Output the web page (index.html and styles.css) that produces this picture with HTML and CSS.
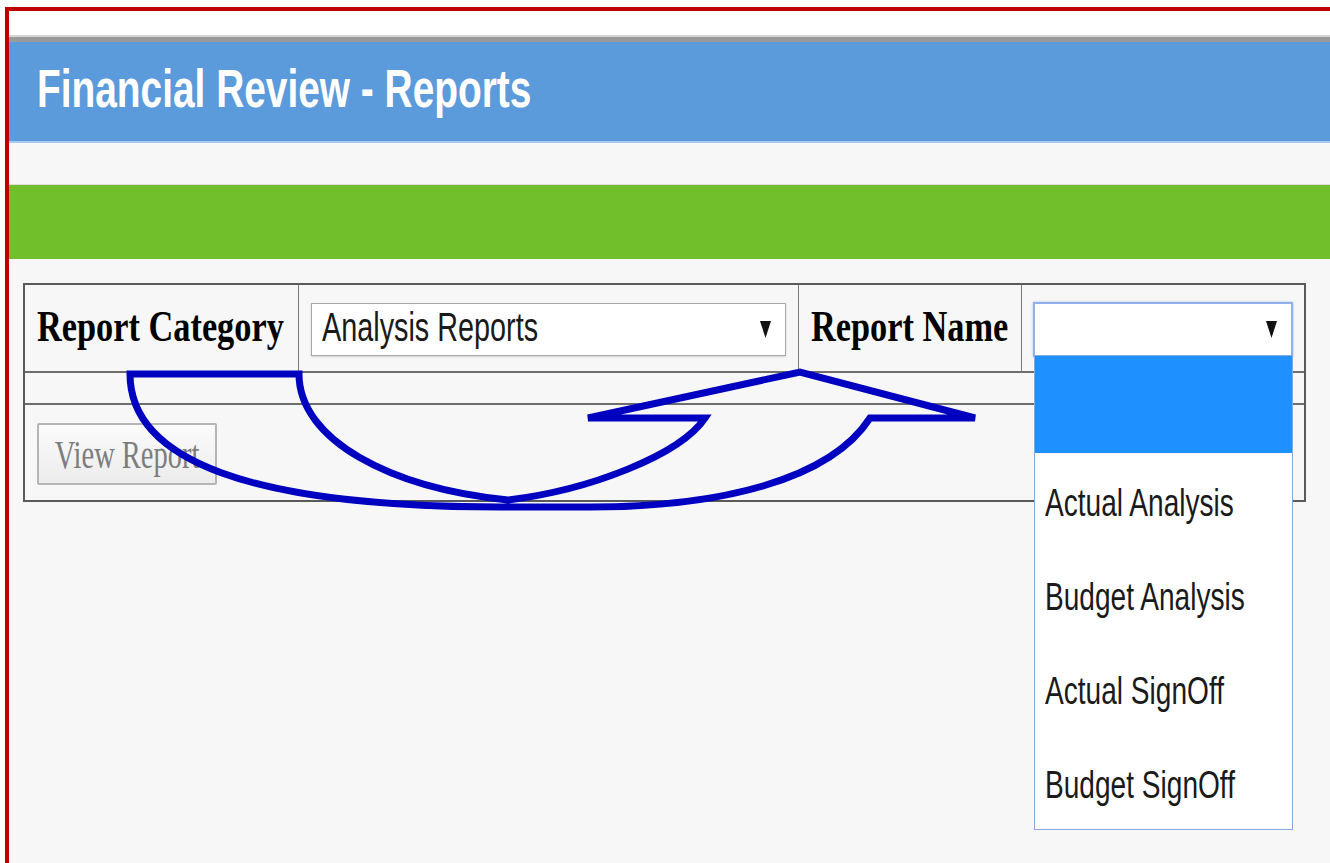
FILE: index.html
```html
<!DOCTYPE html>
<html lang="en">
<head>
<meta charset="utf-8">
<title>Financial Review - Reports</title>
<link rel="stylesheet" href="styles.css">
</head>
<body>
<div class="frame">
  <div class="topgap"></div>
  <div class="shade"></div>
  <header class="header">
    <h1 class="title"><span class="sq sq-title">Financial Review - Reports</span></h1>
  </header>
  <main class="content">
    <div class="band"></div>
    <div class="report-table">
      <div class="row row-fields">
        <div class="cell cell-label1"><span class="sq sq-label">Report Category</span></div>
        <div class="cell cell-select1">
          <div class="select select-wide">
            <span class="sq sq-opt">Analysis Reports</span>
            <svg class="caret" viewBox="0 0 11 17" width="11" height="17"><polygon points="0,0 11,0 5.5,17"/></svg>
          </div>
        </div>
        <div class="cell cell-label2"><span class="sq sq-label">Report Name</span></div>
        <div class="cell cell-select2">
          <div class="select select-open">
            <svg class="caret" viewBox="0 0 11 17" width="11" height="17"><polygon points="0,0 11,0 5.5,17"/></svg>
            <ul class="menu">
              <li class="menu-item is-active"></li>
              <li class="menu-item"><span class="sq sq-opt">Actual Analysis</span></li>
              <li class="menu-item"><span class="sq sq-opt">Budget Analysis</span></li>
              <li class="menu-item"><span class="sq sq-opt">Actual SignOff</span></li>
              <li class="menu-item"><span class="sq sq-opt">Budget SignOff</span></li>
            </ul>
          </div>
        </div>
      </div>
      <div class="row row-empty"></div>
      <div class="row row-actions">
        <button class="btn" type="button"><span class="sq sq-btn">View Report</span></button>
      </div>
    </div>
  </main>
</div>
<svg class="flow-arrow" viewBox="0 0 1330 863" width="1330" height="863">
  <path d="M130,374 L299,374 C299,440 390,488 508,500 C590,490 680,455 705,418 L588,418 L800,372 L975,418 L870,418 C830,480 720,507 590,507 L500,507 C250,507 130,460 130,374 Z"/>
</svg>
</body>
</html>
```
FILE: styles.css
```css
html, body {
  margin: 0;
  padding: 0;
  background: #ffffff;
  overflow: hidden;
  height: 100%;
}

body {
  position: relative;
  font-family: "Liberation Sans", Arial, sans-serif;
}

/* outer frame */
.frame {
  margin: 7px 0 0 5px;
  border-top: 4px solid #c00000;
  border-left: 4px solid #c00000;
  height: calc(100vh - 11px);
  display: flex;
  flex-direction: column;
  background: #ffffff;
}

.topgap {
  height: 24px;
  flex-shrink: 0;
}

.shade {
  height: 7px;
  flex-shrink: 0;
  background: linear-gradient(#d6d6d6 0 2px, #9a9a9a 2px 100%);
}

.header {
  flex-shrink: 0;
  height: 99px;
  background: #5b9adb;
  border-bottom: 2px solid #a9c9ec;
  padding-left: 28px;
}

.title {
  margin: 0;
  font-family: "Liberation Sans", Arial, sans-serif;
  font-weight: bold;
  font-size: 53px;
  line-height: 93px;
  color: #ffffff;
}

/* condensed text runs */
.sq {
  display: inline-block;
  white-space: nowrap;
  transform-origin: 0 50%;
}
.sq-title { transform: scaleX(0.733); }
.sq-label { transform: scaleX(0.78); }
.sq-opt { transform: scaleX(0.72); }
.sq-btn { transform: scaleX(0.73); transform-origin: 50% 50%; }

.content {
  flex: 1;
  background: #f7f7f7;
  padding-top: 41px;
}

.band {
  height: 74px;
  background: #72bf2c;
  border-top: 1px solid #dedede;
}

/* report form table */
.report-table {
  margin: 24px 0 0 14px;
  width: 1283px;
  box-sizing: border-box;
  border: 2px solid #5a5a5a;
}

.row {
  display: flex;
  box-sizing: content-box;
}

.row-fields {
  height: 86px;
  border-bottom: 2px solid #6e6e6e;
  align-items: center;
}

.row-empty {
  height: 30px;
  border-bottom: 2px solid #6e6e6e;
}

.row-actions {
  height: 95px;
  align-items: flex-start;
}

.cell {
  box-sizing: border-box;
  height: 100%;
  display: flex;
  align-items: center;
  flex-shrink: 0;
}

.cell-label1 {
  width: 274px;
  padding-left: 12px;
  border-right: 1px solid #7a7a7a;
}

.cell-select1 {
  width: 500px;
  padding-left: 12px;
  border-right: 1px solid #7a7a7a;
}

.cell-label2 {
  width: 223px;
  padding-left: 12px;
  border-right: 1px solid #7a7a7a;
}

.cell-select2 {
  flex: 1;
  padding-left: 11px;
}

.sq-label {
  font-family: "Liberation Serif", "Times New Roman", serif;
  font-weight: bold;
  font-size: 44px;
  color: #000000;
  position: relative;
  top: -2px;
}

.select {
  position: relative;
  box-sizing: border-box;
  background: #ffffff;
  display: flex;
  align-items: center;
}

.select-wide {
  width: 475px;
  height: 53px;
  margin-top: 3px;
  border: 1px solid #a9a9a9;
  box-shadow: 0 1px 2px rgba(0, 0, 0, 0.15);
  padding-left: 10px;
}

.select-open {
  width: 260px;
  height: 55px;
  margin-top: 3px;
  border: 2px solid #8fb1e8;
  box-shadow: 0 0 2px rgba(80, 130, 220, 0.5);
}

.sq-opt {
  font-family: "Liberation Sans", Arial, sans-serif;
  font-size: 40px;
  color: #1a1a1a;
  position: relative;
  top: -2px;
}

.caret {
  position: absolute;
  right: 14px;
  top: 50%;
  margin-top: -9px;
  fill: #111111;
}

/* open option list of the second select */
.menu {
  position: absolute;
  left: -1px;
  top: 100%;
  margin: 0;
  padding: 0;
  list-style: none;
  width: 259px;
  box-sizing: border-box;
  background: #ffffff;
  border: 1px solid #86a8e0;
  z-index: 5;
}

.menu-item {
  height: 94px;
  display: flex;
  align-items: center;
  padding-left: 10px;
}

.menu-item .sq-opt {
  font-size: 39px;
  color: #1a1a1a;
  top: 3px;
}

.menu-item.is-active {
  height: 97px;
  background: #1e90ff;
}

.btn {
  margin: 18px 0 0 12px;
  width: 180px;
  height: 62px;
  box-sizing: border-box;
  border: 2px solid #b5b5b5;
  border-radius: 2px;
  background: linear-gradient(#fbfbfb, #ececec);
  padding: 0;
  display: flex;
  align-items: center;
  justify-content: center;
  overflow: visible;
}

.sq-btn {
  font-family: "Liberation Serif", "Times New Roman", serif;
  font-size: 39px;
  color: #7d7d7d;
}

/* curved flow arrow drawn across the form */
.flow-arrow {
  position: absolute;
  left: 0;
  top: 0;
  pointer-events: none;
  z-index: 10;
}

.flow-arrow path {
  fill: none;
  stroke: #0000c0;
  stroke-width: 7;
  stroke-linejoin: miter;
}
```
